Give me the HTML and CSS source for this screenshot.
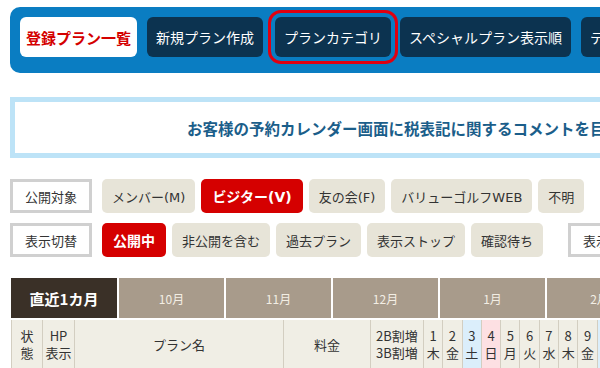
FILE: index.html
```html
<!DOCTYPE html>
<html lang="ja">
<head>
<meta charset="utf-8">
<title>登録プラン一覧</title>
<link rel="stylesheet" href="styles.css">
</head>
<body>
<nav class="topnav">
  <a class="nav-btn current">登録プラン一覧</a>
  <a class="nav-btn">新規プラン作成</a>
  <a class="nav-btn focused">プランカテゴリ</a>
  <a class="nav-btn">スペシャルプラン表示順</a>
  <a class="nav-btn">テンプレート設定</a>
</nav>

<div class="notice">
  <p class="notice-text">お客様の予約カレンダー画面に税表記に関するコメントを目立つように表示できます</p>
</div>

<div class="filters">
  <div class="filter-row">
    <span class="filter-label">公開対象</span>
    <button class="chip">メンバー(M)</button>
    <button class="chip active">ビジター(V)</button>
    <button class="chip">友の会(F)</button>
    <button class="chip">バリューゴルフWEB</button>
    <button class="chip">不明</button>
  </div>
  <div class="filter-row">
    <span class="filter-label">表示切替</span>
    <button class="chip active">公開中</button>
    <button class="chip">非公開を含む</button>
    <button class="chip">過去プラン</button>
    <button class="chip">表示ストップ</button>
    <button class="chip">確認待ち</button>
    <span class="filter-label spaced">表示件数</span>
  </div>
</div>

<div class="calendar">
  <div class="month-row">
    <div class="month current">直近1カ月</div>
    <div class="month">10月</div>
    <div class="month">11月</div>
    <div class="month">12月</div>
    <div class="month">1月</div>
    <div class="month">2月</div>
  </div>
  <div class="head-row">
    <div class="hcell">状<br>態</div>
    <div class="hcell">HP<br>表示</div>
    <div class="hcell">プラン名</div>
    <div class="hcell">料金</div>
    <div class="hcell">2B割増<br>3B割増</div>
    <div class="hcell day">1<br>木</div>
    <div class="hcell day">2<br>金</div>
    <div class="hcell day sat">3<br>土</div>
    <div class="hcell day sun">4<br>日</div>
    <div class="hcell day">5<br>月</div>
    <div class="hcell day">6<br>火</div>
    <div class="hcell day">7<br>水</div>
    <div class="hcell day">8<br>木</div>
    <div class="hcell day">9<br>金</div>
    <div class="hcell day sat">10<br>土</div>
    <div class="hcell day sun">11<br>日</div>
  </div>
</div>
</body>
</html>
```

FILE: styles.css
```css
html, body {
  margin: 0;
  padding: 0;
  overflow: hidden;
  background: #fff;
}
body {
  width: 600px;
  height: 368px;
  font-family: "Noto Sans CJK JP", "Noto Sans", sans-serif;
  color: #333;
}

/* top navigation */
.topnav {
  display: flex;
  align-items: flex-start;
  gap: 10px;
  margin: 7px 0 0 10px;
  padding: 10px 10px 16px;
  height: 66px;
  box-sizing: border-box;
  background: #0a7dc2;
  border-radius: 10px 0 0 10px;
}
.nav-btn {
  flex: none;
  height: 40px;
  display: flex;
  align-items: center;
  justify-content: center;
  padding: 0 9px;
  border-radius: 6px;
  background: #0c3350;
  color: #fff;
  font-size: 14px;
  white-space: nowrap;
  text-decoration: none;
}
.nav-btn.current {
  width: 117px;
  box-sizing: border-box;
  padding: 0;
  background: #fff;
  color: #d40000;
  font-weight: bold;
  font-size: 15px;
}
.nav-btn.focused {
  margin: 0 -1px 0 2px;
  outline: 3px solid #e00010;
  outline-offset: 4px;
}

/* notice banner */
.notice {
  margin: 24px 0 0 10px;
  height: 61px;
  box-sizing: border-box;
  border: 5px solid #bde3f7;
  border-right: 0;
  display: flex;
  align-items: center;
  overflow: hidden;
}
.notice-text {
  margin: 0;
  padding-left: 172px;
  white-space: nowrap;
  font-size: 15.5px;
  font-weight: bold;
  color: #1b5e8a;
}

/* filters */
.filters {
  margin: 21px 0 0 10px;
  display: flex;
  flex-direction: column;
  gap: 10px;
}
.filter-row {
  display: flex;
  gap: 6px;
  white-space: nowrap;
}
.filter-label {
  flex: none;
  width: 82px;
  height: 34px;
  box-sizing: border-box;
  border: 3px solid #d0d0d0;
  background: #fff;
  display: flex;
  align-items: center;
  justify-content: center;
  font-size: 13px;
  margin-right: 4px;
}
.filter-label.spaced {
  margin-left: 19px;
}
.chip {
  flex: none;
  height: 34px;
  padding: 0 10px;
  border: 0;
  border-radius: 5px;
  background: #e7e4d8;
  color: #333;
  font-family: "DejaVu Sans", "Noto Sans CJK JP", sans-serif;
  font-size: 13px;
}
.chip.active {
  padding: 0 11px;
  background: #d50000;
  color: #fff;
  font-weight: bold;
  font-size: 14px;
}

/* calendar header */
.calendar {
  margin: 21px 0 0 11px;
}
.month-row {
  display: flex;
  height: 40px;
}
.month {
  flex: none;
  width: 107px;
  box-sizing: border-box;
  border-left: 2px solid #fff;
  background: #a89b8b;
  color: #f3eee4;
  font-size: 12px;
  display: flex;
  align-items: center;
  justify-content: center;
}
.month.current {
  width: 106px;
  border-left: 0;
  background: #3a3027;
  color: #fff;
  font-weight: bold;
  font-size: 15px;
}
.head-row {
  margin-top: 2px;
  display: grid;
  grid-template-columns: 31px 32px 209px 87px 53px repeat(11, 19.3px);
  height: 48px;
  border-left: 1px solid #d3cec1;
  border-bottom: 1px solid #d3cec1;
  background: #f0eee5;
}
.hcell {
  border-right: 1px solid #d3cec1;
  display: flex;
  align-items: center;
  justify-content: center;
  text-align: center;
  font-size: 13px;
  line-height: 17px;
  white-space: nowrap;
}
.hcell.sat {
  background: #dbeefb;
}
.hcell.sun {
  background: #fde0e3;
}
```
